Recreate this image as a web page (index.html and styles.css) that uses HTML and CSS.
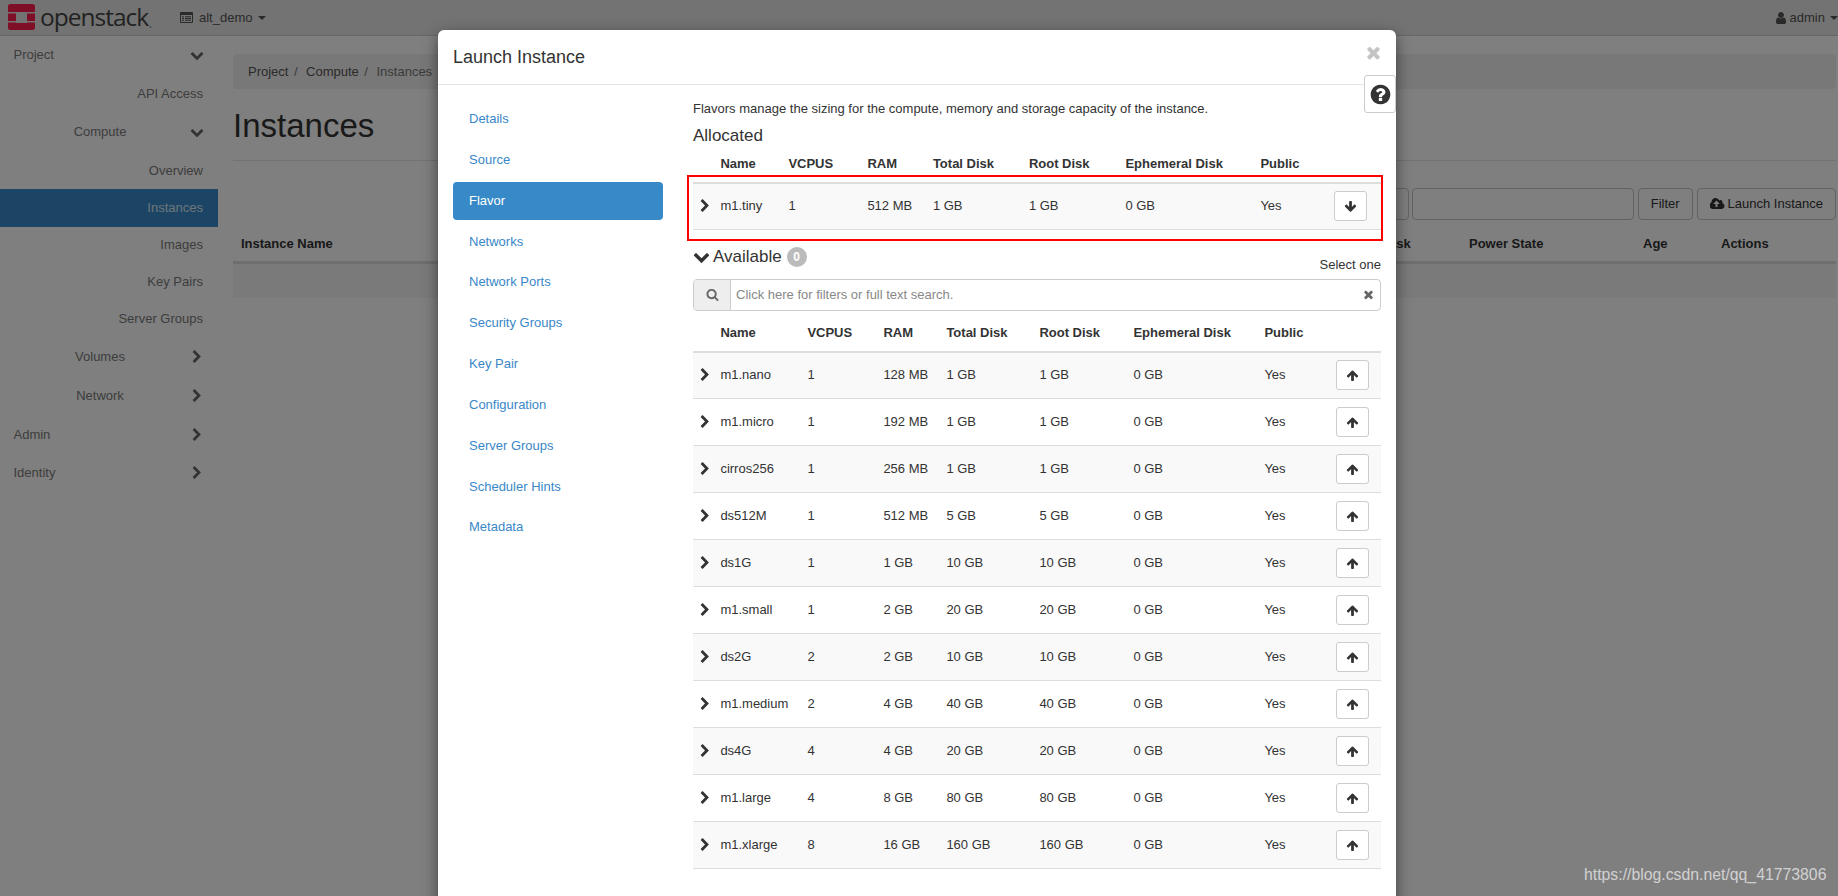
FILE: index.html
```html
<!DOCTYPE html>
<html lang="en">
<head>
<meta charset="utf-8">
<title>Instances - OpenStack Dashboard</title>
<link rel="stylesheet" href="styles.css">
</head>
<body>
<svg class="sprites" aria-hidden="true">
  <symbol id="chev-down" viewBox="0 0 1792 1792"><path d="M1683 808l-742 741q-19 19-45 19t-45-19l-742-741q-19-19-19-45.500t19-45.500l166-165q19-19 45-19t45 19l531 531 531-531q19-19 45-19t45 19l166 165q19 19 19 45.500t-19 45.500z"/></symbol>
  <symbol id="chev-right" viewBox="0 0 1792 1792"><path d="M1363 877l-742 742q-19 19-45 19t-45-19l-166-166q-19-19-19-45t19-45l531-531-531-531q-19-19-19-45t19-45l166-166q19-19 45-19t45 19l742 742q19 19 19 45t-19 45z"/></symbol>
  <symbol id="arrow-up" viewBox="0 0 1792 1792"><path d="M1675 971q0 51-37 90l-75 75q-38 38-91 38-54 0-90-38l-294-293v704q0 52-37.500 84.500t-90.500 32.500h-128q-53 0-90.500-32.500t-37.500-84.500v-704l-294 293q-36 38-90 38t-90-38l-75-75q-38-38-38-90 0-53 38-91l651-651q35-37 90-37 54 0 91 37l651 651q37 39 37 91z"/></symbol>
  <symbol id="arrow-down" viewBox="0 0 1792 1792"><path d="M1675 832q0 53-37 90l-651 652q-39 37-91 37-53 0-90-37l-651-652q-38-36-38-90 0-53 38-91l74-75q39-37 91-37 53 0 90 37l294 294v-704q0-52 38-90t90-38h128q52 0 90 38t38 90v704l294-294q37-37 90-37 52 0 91 37l75 75q37 39 37 91z"/></symbol>
  <symbol id="search" viewBox="0 0 1792 1792"><path d="M1216 832q0-185-131.500-316.500t-316.500-131.500-316.500 131.500-131.500 316.500 131.500 316.500 316.500 131.500 316.500-131.500 131.500-316.500zm512 832q0 52-38 90t-90 38q-54 0-90-38l-343-342q-179 124-399 124-143 0-273.500-55.500t-225-150-150-225-55.500-273.500 55.500-273.500 150-225 225-150 273.500-55.500 273.500 55.500 225 150 150 225 55.500 273.500q0 220-124 399l343 343q37 37 37 90z"/></symbol>
  <symbol id="times" viewBox="0 0 1792 1792"><path d="M1490 1322q0 40-28 68l-136 136q-28 28-68 28t-68-28l-294-294-294 294q-28 28-68 28t-68-28l-136-136q-28-28-28-68t28-68l294-294-294-294q-28-28-28-68t28-68l136-136q28-28 68-28t68 28l294 294 294-294q28-28 68-28t68 28l136 136q28 28 28 68t-28 68l-294 294 294 294q28 28 28 68z"/></symbol>
  <symbol id="question" viewBox="0 0 1792 1792"><path d="M1024 1376v-192q0-14-9-23t-23-9h-192q-14 0-23 9t-9 23v192q0 14 9 23t23 9h192q14 0 23-9t9-23zm256-672q0-88-55.500-163t-138.500-116-170-41q-243 0-371 213-15 24 8 42l132 100q7 6 19 6 16 0 25-12 53-68 86-92 34-24 86-24 48 0 85.500 26t37.500 59q0 38-20 61t-68 45q-63 28-115.500 86.500t-52.500 125.500v36q0 14 9 23t23 9h192q14 0 23-9t9-23q0-19 21.500-49.500t54.500-49.500q32-18 49-28.500t46-35 44.500-48 28-60.500 12.500-81zm384 192q0 209-103 385.500t-279.500 279.500-385.500 103-385.500-103-279.500-279.500-103-385.500 103-385.500 279.500-279.500 385.500-103 385.500 103 279.500 279.500 103 385.500z"/></symbol>
  <symbol id="user" viewBox="0 0 1792 1792"><path d="M1536 1399q0 109-62.500 187t-150.500 78h-854q-88 0-150.500-78t-62.500-187q0-85 8.500-160.500t31.500-152 58.500-131 94-89 134.500-34.500q131 128 313 128t313-128q76 0 134.500 34.500t94 89 58.500 131 31.500 152 8.500 160.500zm-256-887q0 159-112.500 271.500t-271.500 112.500-271.500-112.500-112.500-271.500 112.500-271.500 271.500-112.500 271.500 112.500 112.500 271.500z"/></symbol>
  <symbol id="cloud" viewBox="0 0 1920 1792"><path d="M1216 864q0-14-9-23l-352-352q-9-9-23-9t-23 9l-351 351q-10 12-10 24 0 14 9 23t23 9h224v352q0 13 9.500 22.500t22.500 9.500h192q13 0 22.500-9.500t9.500-22.500v-352h224q13 0 22.500-9.500t9.500-22.500zm640 288q0 159-112.500 271.500t-271.500 112.500h-1088q-185 0-316.500-131.500t-131.500-316.500q0-130 70-240t188-165q-2-30-2-43 0-212 150-362t362-150q156 0 285.500 87t188.500 231q71-62 166-62 106 0 181 75t75 181q0 76-41 138 130 31 213.500 135.500t83.500 238.500z"/></symbol>
</svg>

<div class="page">
  <header class="topbar">
    <a class="brand">
      <svg class="logo" viewBox="0 0 27 26" aria-hidden="true">
        <path fill="#ff1f4f" d="M2.500 0h22a2.500 2.500 0 0 1 2.500 2.500v5.500h-27v-5.500a2.500 2.500 0 0 1 2.500-2.500zM0 9.500h8v7.500h-8zM19 9.500h8v7.500h-8zM0 18.500h8v.5h11v-.5h8v5a2.500 2.500 0 0 1-2.500 2.500h-22a2.500 2.500 0 0 1-2.500-2.500z"/>
      </svg>
      <span class="brand-name">openstack</span><span class="brand-mark">.</span>
    </a>
    <div class="project-pick">
      <svg class="list-icon" viewBox="0 0 13 11" aria-hidden="true">
        <path fill-rule="evenodd" d="M1 0h11a1 1 0 0 1 1 1v9a1 1 0 0 1-1 1h-11a1 1 0 0 1-1-1v-9a1 1 0 0 1 1-1zM1 3v7h11v-7z"/>
        <path d="M2 4.200h2v1h-2zM5 4.200h6v1h-6zM2 6h2v1h-2zM5 6h6v1h-6zM2 7.800h2v1h-2zM5 7.800h6v1h-6z"/>
      </svg>
      <span>alt_demo</span><i class="caret"></i>
    </div>
    <div class="user-pick">
      <svg class="user-icon"><use href="#user"/></svg>
      <span>admin</span><i class="caret"></i>
    </div>
  </header>

  <div class="shell">
    <nav class="sidebar">
      <a class="side h38 top flush">Project<svg class="chev"><use href="#chev-down"/></svg></a>
      <a class="side h38 leaf">API Access</a>
      <a class="side h39 sub"><span>Compute</span><svg class="chev"><use href="#chev-down"/></svg></a>
      <a class="side h38 leaf">Overview</a>
      <a class="side h38 leaf flush active">Instances</a>
      <a class="side h36 leaf flush">Images</a>
      <a class="side h37 leaf">Key Pairs</a>
      <a class="side h37 leaf">Server Groups</a>
      <a class="side h39 sub"><span>Volumes</span><svg class="chev"><use href="#chev-right"/></svg></a>
      <a class="side h39 sub"><span>Network</span><svg class="chev"><use href="#chev-right"/></svg></a>
      <a class="side h38 top">Admin<svg class="chev"><use href="#chev-right"/></svg></a>
      <a class="side h39 top">Identity<svg class="chev"><use href="#chev-right"/></svg></a>
    </nav>

    <main class="content">
      <ol class="crumbs">
        <li>Project</li><li class="sep">/</li><li>Compute</li><li class="sep">/</li><li class="cur">Instances</li>
      </ol>
      <h1 class="page-title">Instances</h1>
      <div class="toolbar">
        <span class="tool-input short"></span>
        <span class="tool-input"></span>
        <button class="tool-btn filter">Filter</button>
        <button class="tool-btn"><svg class="cloud"><use href="#cloud"/></svg>Launch Instance</button>
      </div>
      <div class="bg-head">
        <span class="bg-name">Instance Name</span>
        <span class="bg-task">Task</span>
        <span class="bg-power">Power State</span>
        <span class="bg-age">Age</span>
        <span>Actions</span>
      </div>
      <div class="bg-row"></div>
    </main>
  </div>
</div>

<div class="backdrop"></div>

<section class="modal">
  <header class="modal-head">
    <h2>Launch Instance</h2>
    <svg class="modal-close"><use href="#times"/></svg>
  </header>
  <a class="help"><svg><use href="#question"/></svg></a>
  <div class="modal-body">
    <ul class="steps">
      <li>Details</li>
      <li>Source</li>
      <li class="on">Flavor</li>
      <li>Networks</li>
      <li>Network Ports</li>
      <li>Security Groups</li>
      <li>Key Pair</li>
      <li>Configuration</li>
      <li>Server Groups</li>
      <li>Scheduler Hints</li>
      <li>Metadata</li>
    </ul>
    <div class="step-pane">
      <p class="intro">Flavors manage the sizing for the compute, memory and storage capacity of the instance.</p>
      <h3 class="allocated-title">Allocated</h3>
      <div class="allocated-wrap">
        <table class="grid alloc">
          <colgroup><col class="c0"><col class="c1"><col class="c2"><col class="c3"><col class="c4"><col class="c5"><col class="c6"><col></colgroup>
          <thead><tr><th></th><th>Name</th><th>VCPUS</th><th>RAM</th><th>Total Disk</th><th>Root Disk</th><th>Ephemeral Disk</th><th>Public</th><th></th></tr></thead>
          <tbody>
            <tr><td class="ex"><svg><use href="#chev-right"/></svg></td><td>m1.tiny</td><td>1</td><td>512 MB</td><td>1 GB</td><td>1 GB</td><td>0 GB</td><td>Yes</td><td class="act"><button class="move"><svg><use href="#arrow-down"/></svg></button></td></tr>
          </tbody>
        </table>
        <div class="annotation"></div>
      </div>
      <div class="avail-head">
        <h3><svg><use href="#chev-down"/></svg>Available<span class="badge">0</span></h3>
        <span class="select-one">Select one</span>
      </div>
      <div class="search">
        <span class="search-addon"><svg><use href="#search"/></svg></span>
        <span class="search-text">Click here for filters or full text search.</span>
        <svg class="search-clear"><use href="#times"/></svg>
      </div>
      <table class="grid avail">
        <colgroup><col class="c0"><col class="c1"><col class="c2"><col class="c3"><col class="c4"><col class="c5"><col class="c6"><col></colgroup>
        <thead><tr><th></th><th>Name</th><th>VCPUS</th><th>RAM</th><th>Total Disk</th><th>Root Disk</th><th>Ephemeral Disk</th><th>Public</th><th></th></tr></thead>
        <tbody>
          <tr><td class="ex"><svg><use href="#chev-right"/></svg></td><td>m1.nano</td><td>1</td><td>128 MB</td><td>1 GB</td><td>1 GB</td><td>0 GB</td><td>Yes</td><td class="act"><button class="move"><svg><use href="#arrow-up"/></svg></button></td></tr>
          <tr><td class="ex"><svg><use href="#chev-right"/></svg></td><td>m1.micro</td><td>1</td><td>192 MB</td><td>1 GB</td><td>1 GB</td><td>0 GB</td><td>Yes</td><td class="act"><button class="move"><svg><use href="#arrow-up"/></svg></button></td></tr>
          <tr><td class="ex"><svg><use href="#chev-right"/></svg></td><td>cirros256</td><td>1</td><td>256 MB</td><td>1 GB</td><td>1 GB</td><td>0 GB</td><td>Yes</td><td class="act"><button class="move"><svg><use href="#arrow-up"/></svg></button></td></tr>
          <tr><td class="ex"><svg><use href="#chev-right"/></svg></td><td>ds512M</td><td>1</td><td>512 MB</td><td>5 GB</td><td>5 GB</td><td>0 GB</td><td>Yes</td><td class="act"><button class="move"><svg><use href="#arrow-up"/></svg></button></td></tr>
          <tr><td class="ex"><svg><use href="#chev-right"/></svg></td><td>ds1G</td><td>1</td><td>1 GB</td><td>10 GB</td><td>10 GB</td><td>0 GB</td><td>Yes</td><td class="act"><button class="move"><svg><use href="#arrow-up"/></svg></button></td></tr>
          <tr><td class="ex"><svg><use href="#chev-right"/></svg></td><td>m1.small</td><td>1</td><td>2 GB</td><td>20 GB</td><td>20 GB</td><td>0 GB</td><td>Yes</td><td class="act"><button class="move"><svg><use href="#arrow-up"/></svg></button></td></tr>
          <tr><td class="ex"><svg><use href="#chev-right"/></svg></td><td>ds2G</td><td>2</td><td>2 GB</td><td>10 GB</td><td>10 GB</td><td>0 GB</td><td>Yes</td><td class="act"><button class="move"><svg><use href="#arrow-up"/></svg></button></td></tr>
          <tr><td class="ex"><svg><use href="#chev-right"/></svg></td><td>m1.medium</td><td>2</td><td>4 GB</td><td>40 GB</td><td>40 GB</td><td>0 GB</td><td>Yes</td><td class="act"><button class="move"><svg><use href="#arrow-up"/></svg></button></td></tr>
          <tr><td class="ex"><svg><use href="#chev-right"/></svg></td><td>ds4G</td><td>4</td><td>4 GB</td><td>20 GB</td><td>20 GB</td><td>0 GB</td><td>Yes</td><td class="act"><button class="move"><svg><use href="#arrow-up"/></svg></button></td></tr>
          <tr><td class="ex"><svg><use href="#chev-right"/></svg></td><td>m1.large</td><td>4</td><td>8 GB</td><td>80 GB</td><td>80 GB</td><td>0 GB</td><td>Yes</td><td class="act"><button class="move"><svg><use href="#arrow-up"/></svg></button></td></tr>
          <tr><td class="ex"><svg><use href="#chev-right"/></svg></td><td>m1.xlarge</td><td>8</td><td>16 GB</td><td>160 GB</td><td>160 GB</td><td>0 GB</td><td>Yes</td><td class="act"><button class="move"><svg><use href="#arrow-up"/></svg></button></td></tr>
        </tbody>
      </table>
    </div>
  </div>
</section>

<div class="watermark">https://blog.csdn.net/qq_41773806</div>
</body>
</html>
```
FILE: styles.css
```css
* { box-sizing: border-box; }
html, body { margin: 0; height: 100%; overflow: hidden; }
body { font: 13px/18px "Liberation Sans", Arial, sans-serif; color: #333; background: #fff; position: relative; }
.sprites { display: none; }
svg { fill: currentColor; display: block; }

/* page behind the dialog */
.page { height: 896px; overflow: hidden; }
.topbar { height: 36px; background: #e6e6e6; border-bottom: 1px solid #cfcfcf; display: flex; align-items: center; padding: 0 0 0 8px; color: #555; }
.brand { display: flex; align-items: center; width: 172px; }
.logo { width: 27px; height: 26px; margin-top: -1px; }
.brand-name { font: 500 24.500px/30px "Open Sans", sans-serif; letter-spacing: -1px; color: #444; margin-left: 5px; margin-top: -2px; }
.brand-mark { font: 400 16px/16px "Open Sans", sans-serif; color: #999; margin-top: 8px; }
.project-pick { display: flex; align-items: center; gap: 6px; }
.list-icon { width: 13px; height: 11px; }
.caret { display: inline-block; width: 0; height: 0; border-top: 4px solid currentColor; border-left: 4px solid transparent; border-right: 4px solid transparent; }
.user-pick { margin-left: auto; display: flex; align-items: center; }
.user-icon { width: 14px; height: 14px; margin-right: 2px; }
.user-pick .caret { margin-left: 5px; }

.shell { display: flex; }
.sidebar { width: 218px; flex: none; color: #7a7a7a; }
.side { display: flex; align-items: center; padding-top: 1px; }
.side.flush { padding-top: 0; }
.h36 { height: 36px; } .h37 { height: 37px; } .h38 { height: 38px; } .h39 { height: 39px; }
.top { justify-content: space-between; padding-right: 14px; padding-left: 13.500px; }
.sub { padding-right: 14px; padding-left: 10px; }
.sub span { flex: 1; text-align: center; }
.leaf { justify-content: flex-end; padding-right: 15px; }
.active { background: #388bca; color: #d9e9f5; }
.chev { width: 14px; height: 14px; color: #666; }

.content { flex: 1; padding: 18px 2px 0 15px; min-width: 0; }
.crumbs { list-style: none; margin: 0; padding: 0 15px; height: 35px; display: flex; align-items: center; background: #f0f0f0; border-radius: 4px; color: #555; }
.crumbs .sep { margin: 0 8.500px 0 5.500px; color: #777; }
.crumbs .cur { color: #777; }
.page-title { margin: 0; height: 72px; padding-top: 17px; font: 400 33px/40px "Liberation Sans", sans-serif; color: #333; border-bottom: 1px solid #e4e4e4; }
.toolbar { display: flex; justify-content: flex-end; margin-top: 27px; gap: 4px; height: 32px; }
.tool-input { display: block; width: 222px; border: 1px solid #c4c4c4; border-radius: 4px; }
.tool-input.short { width: 60px; margin-right: -1px; }
.tool-btn { font: inherit; color: #333; padding: 0 12px; height: 32px; background: #fff; border: 1px solid #c4c4c4; border-radius: 4px; display: flex; align-items: center; }
.tool-btn.filter { padding: 0 12px; }
.cloud { width: 15px; height: 14px; margin-right: 3px; }
.bg-head { display: flex; height: 41px; margin-top: 3px; padding: 12px 0 0 8px; font-weight: 700; border-bottom: 3px solid #ddd; color: #333; }
.bg-name { width: 1141px; }
.bg-task { width: 87px; }
.bg-power { width: 174px; }
.bg-age { width: 78px; }
.bg-row { height: 34px; background: #f4f4f4; }

.backdrop { position: absolute; inset: 0; background: rgba(0, 0, 0, .5); }

/* dialog */
.modal { position: absolute; left: 438px; top: 30px; width: 958px; height: 900px; background: #fff; border-radius: 6px 6px 0 0; box-shadow: 0 5px 15px rgba(0, 0, 0, .5); }
.modal-head { height: 55px; border-bottom: 1px solid #e5e5e5; padding: 0 15px; display: flex; align-items: center; justify-content: space-between; }
.modal-head h2 { margin: 0; font: 400 18px/20px "Liberation Sans", sans-serif; color: #333; }
.modal-close { position: absolute; right: 13px; top: 13px; width: 19px; height: 19px; color: #c4c4c4; }
.help { position: absolute; right: 0; top: 45px; width: 32px; height: 38px; background: #fff; border: 1px solid #ccc; border-radius: 3px; display: flex; align-items: center; justify-content: center; color: #333; }
.help svg { width: 23px; height: 23px; }
.modal-body { display: flex; }
.steps { list-style: none; width: 210px; margin: 15px 0 0 15px; padding: 0; flex: none; color: #3a87c8; }
.steps li { height: 38px; line-height: 38px; padding-left: 16px; margin-bottom: 2.850px; border-radius: 4px; }
.steps .on { background: #378ac7; color: #fff; }
.step-pane { width: 688px; margin-left: 30px; padding-top: 15px; }
.intro { margin: 0; }
.allocated-title { margin: 8px 0 0; font: 400 17px/20px "Liberation Sans", sans-serif; }
.allocated-wrap { position: relative; }
.annotation { position: absolute; left: -6px; right: -2px; top: 20px; height: 66px; border: 2px solid #f00; pointer-events: none; }

.grid { width: 688px; border-collapse: collapse; table-layout: fixed; }
.grid th { font-weight: 700; text-align: left; padding: 0 8px 9px; height: 28px; border-bottom: 2px solid #ddd; vertical-align: bottom; white-space: nowrap; }
.grid td { padding: 0 8px; height: 47px; border-bottom: 1px solid #ddd; white-space: nowrap; }
.alloc td { height: 46px; }
.grid tbody tr:nth-child(odd) { background: #f9f9f9; }
.grid .ex { padding: 0 0 0 5px; }
.grid .ex svg { width: 14px; height: 14px; color: #333; }
.grid .c0 { width: 19.400px; }
.alloc { margin-top: 9px; }
.alloc .c1 { width: 68px; } .alloc .c2 { width: 79px; } .alloc .c3 { width: 65.500px; } .alloc .c4 { width: 96px; } .alloc .c5 { width: 96.500px; } .alloc .c6 { width: 135px; }
.avail .c1 { width: 87px; } .avail .c2 { width: 76px; } .avail .c3 { width: 63px; } .avail .c4 { width: 93px; } .avail .c5 { width: 94px; } .avail .c6 { width: 131px; }
.grid .act { padding: 0; text-align: right; }
.move { width: 33px; height: 30px; padding: 0; background: #fff; border: 1px solid #ccc; border-radius: 3px; display: inline-flex; align-items: center; justify-content: center; vertical-align: middle; color: #333; }
.move svg { width: 13px; height: 13px; }
.alloc .act { padding-right: 14px; }
.avail .act { padding-right: 12px; }

.avail-head { display: flex; justify-content: space-between; align-items: flex-end; margin-top: 11px; height: 29px; }
.avail-head h3 { margin: 0 0 3px; display: flex; align-items: center; font: 400 17px/20px "Liberation Sans", sans-serif; }
.avail-head h3 svg { width: 17px; height: 17px; margin: 0 3px 0 0; }
.badge { display: inline-block; min-width: 20px; height: 20px; margin-left: 5px; border-radius: 10px; background: #bbb; color: #fff; font: 700 12px/20px "Liberation Sans", sans-serif; text-align: center; }
.select-one { line-height: 18px; margin-bottom: -4px; }
.search { display: flex; align-items: stretch; height: 32px; margin-top: 9px; border: 1px solid #ccc; border-radius: 4px; }
.search-addon { width: 37px; background: #eee; border-right: 1px solid #ccc; display: flex; align-items: center; justify-content: center; color: #666; border-radius: 3px 0 0 3px; }
.search-addon svg { width: 13px; height: 13px; }
.search-text { flex: 1; color: #888; padding-left: 5px; line-height: 29px; }
.search-clear { width: 13px; height: 13px; align-self: center; margin-right: 5px; color: #666; }
.avail { margin-top: 13px; }

.watermark { position: absolute; left: 1584px; top: 865px; font: 15.800px/20px "Liberation Sans", sans-serif; color: rgba(255, 255, 255, .65); }
```
